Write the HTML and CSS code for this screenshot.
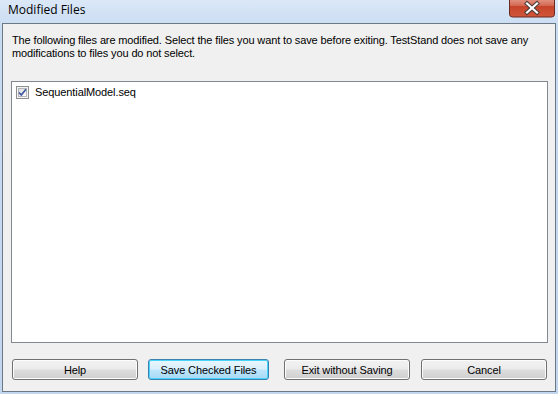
FILE: index.html
```html
<!DOCTYPE html>
<html>
<head>
<meta charset="utf-8">
<title>Modified Files</title>
<link rel="stylesheet" href="styles.css">
</head>
<body>
<div class="window">
  <div class="titlebar">
    <span class="title">Modified Files</span>
    <div class="close">
      <svg width="46" height="18" viewBox="0 0 46 18">
        <defs>
          <linearGradient id="cg" x1="0" y1="0" x2="0" y2="1">
            <stop offset="0" stop-color="#e9a99a"/>
            <stop offset="0.45" stop-color="#d46a55"/>
            <stop offset="0.5" stop-color="#c7442b"/>
            <stop offset="1" stop-color="#d0573a"/>
          </linearGradient>
        </defs>
        <rect x="0.5" y="-4" width="45" height="21" rx="3" fill="url(#cg)" stroke="#6b2a22"/>
        <path d="M18 3.5 L28 12.5 M28 3.5 L18 12.5" stroke="#4a3b3b" stroke-width="4.2" stroke-linecap="square"/>
        <path d="M18 3.5 L28 12.5 M28 3.5 L18 12.5" stroke="#ffffff" stroke-width="2.2" stroke-linecap="square"/>
      </svg>
    </div>
  </div>
  <div class="client">
    <p class="message">The following files are modified. Select the files you want to save before exiting. TestStand does not save any modifications to files you do not select.</p>
    <div class="listbox">
      <div class="item">
        <svg class="check" width="13" height="13" viewBox="0 0 13 13">
          <defs>
            <linearGradient id="bg" x1="0" y1="0" x2="1" y2="1">
              <stop offset="0" stop-color="#dcdcdc"/>
              <stop offset="1" stop-color="#ffffff"/>
            </linearGradient>
          </defs>
          <rect x="0.5" y="0.5" width="12" height="12" fill="#f4f4f4" stroke="#8e8f8f"/>
          <rect x="2.5" y="2.5" width="8" height="8" fill="url(#bg)" stroke="#b3b5b8"/>
          <path d="M3 6.5 L5.3 9 L10 3.3" fill="none" stroke="#3c55a0" stroke-width="1.7"/>
        </svg>
        <span>SequentialModel.seq</span>
      </div>
    </div>
    <div class="buttons">
      <button class="btn help">Help</button>
      <button class="btn save default">Save Checked Files</button>
      <button class="btn exit">Exit without Saving</button>
      <button class="btn cancel">Cancel</button>
    </div>
  </div>
</div>
</body>
</html>
```

FILE: styles.css
```css
html, body {
  margin: 0;
  padding: 0;
  background: #c8daef;
}
.window {
  width: 558px;
  height: 394px;
  display: flex;
  flex-direction: column;
  background: linear-gradient(to bottom, #dbe8f7 0px, #c7dbf1 30px, #c2d7ef 100%);
  box-sizing: border-box;
  font-family: "Liberation Sans", Arial, sans-serif;
}
.titlebar {
  height: 23px;
  flex: none;
  display: flex;
  justify-content: space-between;
  align-items: flex-start;
}
.title {
  font-family: "Open Sans", "Liberation Sans", sans-serif;
  font-size: 12px;
  color: #000;
  padding: 2px 0 0 8px;
  line-height: 16px;
}
.close {
  margin-right: 3px;
  height: 18px;
}
.close svg {
  display: block;
}
.client {
  flex: 1;
  margin: 0 2px 2px 2px;
  border: 1px solid #6d7886;
  background: #f0f0f0;
  display: flex;
  flex-direction: column;
  padding: 0 7px 0 8px;
}
.message {
  margin: 10px 0 0 1px;
  font-size: 11px;
  letter-spacing: -0.13px;
  line-height: 13px;
  color: #000;
  height: 47px;
}
.listbox {
  height: 256px;
  border: 1px solid #828790;
  background: #fff;
  padding: 4px 0 0 4px;
}
.item {
  display: flex;
  align-items: center;
  gap: 6px;
  font-size: 11px;
  letter-spacing: -0.1px;
  line-height: 13px;
  color: #000;
}
.check {
  display: block;
  flex: none;
}
.buttons {
  display: flex;
  margin-top: 16px;
  padding-left: 1px;
}
.btn {
  flex: none;
  box-sizing: border-box;
  height: 21px;
  border: 1px solid #707070;
  border-radius: 3px;
  background: linear-gradient(to bottom, #f2f2f2 0%, #ebebeb 48%, #dddddd 52%, #cfcfcf 100%);
  box-shadow: inset 0 0 0 1px #fcfcfc;
  font-family: "Liberation Sans", Arial, sans-serif;
  font-size: 11px;
  letter-spacing: -0.1px;
  color: #000;
  padding: 0;
  margin: 0;
}
.help { width: 126px; }
.save { width: 121px; margin-left: 10px; }
.exit { width: 126px; margin-left: 15px; }
.cancel { width: 126px; margin-left: 11px; }
.default {
  border-color: #3c7fb1;
  box-shadow: inset 0 0 0 1px #48d4fa;
  background: linear-gradient(to bottom, #eaf6fd 0%, #d9f0fc 48%, #bee6fd 52%, #a7d9f5 100%);
}
```
